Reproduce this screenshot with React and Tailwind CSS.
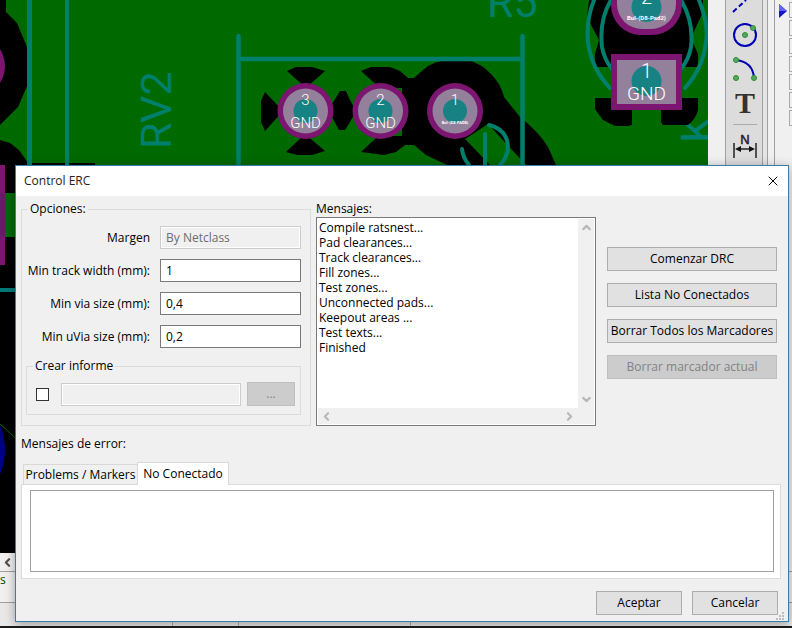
import React from 'react';
import { X, ChevronUp, ChevronDown, ChevronLeft, ChevronRight } from 'lucide-react';

const messages = [
  'Compile ratsnest...',
  'Pad clearances...',
  'Track clearances...',
  'Fill zones...',
  'Test zones...',
  'Unconnected pads...',
  'Keepout areas ...',
  'Test texts...',
  'Finished',
];

const fields = [
  { id: 'clearance', label: 'Margen', value: 'By Netclass', disabled: true },
  { id: 'track', label: 'Min track width (mm):', value: '1' },
  { id: 'via', label: 'Min via size (mm):', value: '0,4' },
  { id: 'uvia', label: 'Min uVia size (mm):', value: '0,2' },
];

const RoundPad = ({ x, number, net, small }) => (
  <g>
    <circle cx={x} cy="111" r="28" fill="#7d1670" />
    <circle cx={x} cy="111" r="22.5" fill="#93809b" />
    <circle cx={x} cy="111" r="12" fill="#178284" />
    <text x={x} y="105" fontSize="15" textAnchor="middle">{number}</text>
    <text x={x} y={small ? 124 : 128} fontSize={small ? 4 : 15} fontWeight={small ? 700 : 300} textAnchor="middle">{net}</text>
  </g>
);

const Board = () => (
  <svg
    className="absolute inset-0 h-full w-full"
    viewBox="0 0 708 553"
    preserveAspectRatio="xMinYMin slice"
    fontFamily="Roboto, sans-serif"
    fontWeight="300"
    fill="#fff"
  >
    <rect width="2000" height="553" fill="#006900" />

    {/* Left edge */}
    <path d="M0 0H6V12L17 23L27 47L28 75V84L18 107L0 125V140L10 143L19 150L28 163H95V180H0Z" fill="#000" />
    <circle cx="-26" cy="66" r="31" fill="#7d1670" />
    <rect y="165" width="200" height="388" fill="#000" />
    <rect y="193" width="80" height="44" fill="#006900" />
    <rect y="165" width="5" height="100" fill="#7d1670" />
    <rect y="193" width="5" height="44" fill="#6b1a69" />
    <rect y="288" width="80" height="4" fill="#007a78" />
    <circle cx="-58" cy="450" r="63" fill="#000087" />
    <path d="M0 424L60 478" stroke="#006900" />
    <g stroke="#00806c" strokeWidth="4" fill="none">
      <path d="M29.500 0V165" strokeWidth="5" />
      <path d="M67 0V165" />
    </g>

    {/* Thermal reliefs */}
    <g fill="#000">
      <path d="M287 71L296 67H312L325 71L306 88Z" />
      <path d="M286 152L305 134L325 151L312 155H297Z" />
      <path d="M265 92L283 111L265 131L261 122V101Z" />
      <path d="M340 91H346L350 100L356 111L350 122L345 130H339L332 117V104Z" />
      <path d="M361 71L371 67H390L400 71L408 78H414L423 70Q434 60 450 60H468Q482 64 491 74Q501 84 504 97L520 117Q538 131 548 147L556 165H526L488 124L465 139L490 165H447L426 155L414 145H405L396 152L384 155L361 152L378 136H402V88H380Z" />
    </g>
    <g stroke="#00806c" strokeWidth="4" fill="none" strokeLinecap="round">
      <path d="M238.500 36V165M522.500 36V165M240 59H521" strokeWidth="4.500" />
      <path d="M489 125Q508 130 508 148Q507 158 500 165M485 134V165M462 149Q463 158 469 165" />
    </g>
    <RoundPad x="305.500" number="3" net="GND" />
    <RoundPad x="380.500" number="2" net="GND" />
    <RoundPad x="455" number="1" net="Bul-(D8-PAD8)" small />

    <g fill="#00806c" fontWeight="400">
      <text transform="translate(171 149) rotate(-90)" fontSize="43">RV2</text>
      <text x="487" y="17" fontSize="43">R5</text>
      <text transform="translate(713 143) rotate(-90)" fontSize="44">K</text>
    </g>

    {/* Square pad */}
    <path d="M589 0H703V12L691 38L698 54V67H595V54L599 40L587 17Z" fill="#000" />
    <path d="M595 98H632V125L628 126H615L603 120L595 109ZM661 98H698V110Q696 119 688 125H663L661 122Z" fill="#000" />
    <g stroke="#00806c" strokeWidth="4" fill="none" strokeLinecap="round">
      <path d="M594 0Q586 20 588 42Q591 68 610 88M699 0Q709 25 706 42Q703 68 685 88" />
      <path d="M611 0Q599 20 602 47Q604 59 612 69M681 0Q694 22 691 47Q689 59 681 69" />
    </g>
    <rect x="611" y="-50" width="71" height="85" rx="30" fill="#7d1670" />
    <rect x="617" y="-50" width="59" height="79" rx="25" fill="#93809b" />
    <circle cx="646.500" cy="7" r="15" fill="#178284" />
    <text x="646.500" y="4" fontSize="20" textAnchor="middle">2</text>
    <text x="646.500" y="20" fontSize="6" fontWeight="700" textAnchor="middle">Bul-(D8-Pad2)</text>
    <rect x="611" y="54" width="71" height="56" fill="#7d1670" />
    <rect x="617" y="60" width="59" height="44" fill="#93809b" />
    <circle cx="646.500" cy="81" r="15" fill="#178284" />
    <text x="646.500" y="78" fontSize="20" textAnchor="middle">1</text>
    <text x="646.500" y="100" fontSize="19" textAnchor="middle">GND</text>
  </svg>
);

const Toolbar = () => (
  <svg className="block w-full" height="166" viewBox="0 0 36 166" fill="none">
    <g stroke="#0000b4" strokeWidth="2">
      <path d="M7 12L20 0" strokeDasharray="5 3" />
      <circle cx="19" cy="35" r="11" />
      <path d="M10 60Q27 62 28 78" />
    </g>
    <g fill="#4fae54" stroke="#35853b">
      <circle cx="19" cy="35" r="2.500" />
      <circle cx="27" cy="28" r="2.500" />
      <circle cx="10" cy="60" r="2.500" />
      <circle cx="10" cy="78" r="2.500" />
      <circle cx="28" cy="78" r="2.500" />
    </g>
    <text x="19" y="113" fontSize="30" fontWeight="700" fontFamily="Liberation Serif, serif" textAnchor="middle" fill="#333">T</text>
    <path d="M7 124.500H31" stroke="#aaa" />
    <text x="19" y="144" fontSize="13" fontFamily="Liberation Sans, sans-serif" textAnchor="middle" fill="#222" stroke="#222" strokeWidth="0.500">N</text>
    <path d="M8 143V158M30 143V158M11 149H27" stroke="#222" strokeWidth="1.500" />
    <path d="M9 149L15 146V152ZM29 149L23 146V152Z" fill="#111" />
  </svg>
);

const LayerList = () => (
  <div className="relative w-[18px] shrink-0 overflow-hidden border-l border-[#a0a0a0] bg-[#f0f0f0]">
    <svg className="absolute left-1 top-1" width="8" height="14" viewBox="0 0 8 14">
      <path d="M0 0L8 7L0 14Z" fill="#1414c8" />
      <path d="M0 0L8 7H0Z" fill="#6464f0" />
    </svg>
    <div className="ml-[14px] flex flex-col gap-[2px] pt-[2px]">
      {[0, 1, 2, 3, 4, 5, 6].map((row) => (
        <div key={row} className="h-4 border border-r-0 border-[#a8a8a8]" />
      ))}
    </div>
  </div>
);

const Button = ({ className = '', disabled, children }) => (
  <button
    type="button"
    disabled={disabled}
    className={`h-6 border border-[#adadad] bg-[#e1e1e1] text-center disabled:border-[#bfbfbf] disabled:bg-[#cccccc] disabled:text-[#838383] ${className}`}
  >
    {children}
  </button>
);

const Options = () => (
  <fieldset className="w-[290px] min-w-0 shrink-0 border border-[#dcdcdc] pb-[10px] pl-1 pr-[9px]">
    <legend className="ml-[2px] px-[2px]">Opciones:</legend>
    <div className="grid grid-cols-[1fr_141px] items-center gap-[10px] pt-[9px]">
      {fields.map((field) => (
        <React.Fragment key={field.id}>
          <label htmlFor={field.id} className="text-right">{field.label}</label>
          <input
            id={field.id}
            type="text"
            defaultValue={field.value}
            disabled={field.disabled}
            className="h-[23px] w-full border border-[#7a7a7a] bg-white px-[5px] disabled:border-[#cccccc] disabled:bg-[#f0f0f0] disabled:text-[#6d6d6d] disabled:shadow-[inset_0_0_0_1px_#fff]"
          />
        </React.Fragment>
      ))}
    </div>
    <fieldset className="mt-[10px] min-w-0 border border-[#dcdcdc] pb-2">
      <legend className="ml-[6px] px-[2px]">Crear informe</legend>
      <div className="flex items-center pl-[9px] pr-[5px] pt-2">
        <input type="checkbox" aria-label="Crear informe" className="size-[13px] appearance-none border border-[#333] bg-white" />
        <input type="text" aria-label="Archivo de informe" disabled className="ml-3 h-[23px] min-w-0 flex-1 border border-[#cccccc] bg-[#f0f0f0] shadow-[inset_0_0_0_1px_#fff]" />
        <Button disabled className="ml-[6px] w-12">...</Button>
      </div>
    </fieldset>
  </fieldset>
);

const Messages = () => (
  <div className="flex min-w-0 flex-1 flex-col">
    <label htmlFor="messages">Mensajes:</label>
    <div className="flex flex-1 flex-col border border-[#7a7a7a] bg-white p-px">
      <div className="flex flex-1">
        <textarea
          id="messages"
          readOnly
          wrap="off"
          defaultValue={messages.join('\n')}
          className="min-w-0 flex-1 resize-none overflow-hidden px-px pt-px leading-[15px] outline-none"
        />
        <div className="flex w-4 flex-col items-center justify-between bg-[#f0f0f0] py-[2px] text-[#b8b8b8]">
          <ChevronUp size={13} strokeWidth={4} />
          <ChevronDown size={13} strokeWidth={4} />
        </div>
      </div>
      <div className="flex h-4 items-center justify-between bg-[#f0f0f0] pl-[2px] pr-[18px] text-[#b8b8b8]">
        <ChevronLeft size={13} strokeWidth={4} />
        <ChevronRight size={13} strokeWidth={4} />
      </div>
    </div>
  </div>
);

const Dialog = () => (
  <div
    role="dialog"
    aria-labelledby="dialog-title"
    className="absolute left-[15px] right-[3px] top-[165px] border border-[#3a7cab] bg-[#f0f0f0] shadow-[0_2px_10px_rgba(0,0,0,0.35)]"
  >
    <div className="flex h-[30px] items-center justify-between bg-white pl-2 pr-[7px]">
      <h1 id="dialog-title" className="text-[#222]">Control ERC</h1>
      <button type="button" aria-label="Cerrar">
        <X size={16} strokeWidth={1.5} />
      </button>
    </div>

    <div className="flex gap-[5px] pl-[5px] pr-[11px] pt-[5px]">
      <Options />
      <Messages />
      <div className="ml-[6px] flex w-[170px] shrink-0 flex-col gap-3 pt-[46px]">
        <Button>Comenzar DRC</Button>
        <Button>Lista No Conectados</Button>
        <Button>Borrar Todos los Marcadores</Button>
        <Button disabled>Borrar marcador actual</Button>
      </div>
    </div>

    <div className="pl-[5px] pr-[7px] pt-[10px]">
      <h2>Mensajes de error:</h2>
      <div role="tablist" className="mt-[10px] flex items-end pl-[2px]">
        <button type="button" role="tab" aria-selected="false" className="h-[21px] w-[114px] whitespace-nowrap border border-r-0 border-[#d9d9d9] bg-[#f0f0f0]">
          Problems / Markers
        </button>
        <button type="button" role="tab" aria-selected="true" className="relative z-10 h-[23px] w-[92px] whitespace-nowrap border border-b-0 border-[#d9d9d9] bg-white">
          No Conectado
        </button>
      </div>
      <div role="tabpanel" className="-mt-px border border-[#dcdcdc] bg-white pb-[6px] pl-2 pr-[6px] pt-[5px]">
        <div role="listbox" aria-label="No Conectado" className="h-[82px] border border-[#a0a0a0] bg-white" />
      </div>
    </div>

    <div className="flex justify-end gap-[10px] pb-[6px] pr-[10px] pt-3">
      <Button className="w-[86px]">Aceptar</Button>
      <Button className="w-[86px]">Cancelar</Button>
    </div>

    {/* Resize grip */}
    <svg className="absolute bottom-px right-1" width="8" height="8" fill="#bdbdbd">
      <path d="M6 0h2v2h-2zM3 3h2v2h-2zM6 3h2v2h-2zM0 6h2v2h-2zM3 6h2v2h-2zM6 6h2v2h-2z" />
    </svg>
  </div>
);

const App = () => {
  return (
    <div className="relative flex h-screen flex-col overflow-hidden bg-[#f0f0f0] font-['Open_Sans','Noto_Sans',sans-serif] text-[12px] leading-4 text-black">
      {/* Editor window */}
      <div className="flex min-h-0 flex-1">
        <div className="flex min-w-0 flex-1 flex-col">
          <div className="relative flex-1 overflow-hidden">
            <Board />
          </div>
          <div className="flex h-[18px] items-center pl-px text-[#505050]">
            <ChevronLeft size={13} strokeWidth={4} />
          </div>
        </div>
        <div className="w-[17px] shrink-0 bg-[#f0f0f0]" />
        <div className="w-[38px] shrink-0 border-x border-[#a0a0a0] bg-[#dcdcdc]">
          <Toolbar />
        </div>
        <div className="w-[5px] shrink-0 border-r border-[#a0a0a0] bg-[#e4e4e4]" />
        <div className="w-[6px] shrink-0 bg-[#f0f0f0]" />
        <LayerList />
      </div>
      <div className="h-8 border-y border-[#a0a0a0] text-[#004800]">s</div>
      {/* Status bar */}
      <div className="flex h-[23px] bg-[#e8e8e8]">
        <div className="w-[173px] border-r border-[#b0b0b0]" />
        <div className="w-[66px] border-r border-[#b0b0b0]" />
        <div className="w-[172px] border-r border-[#b0b0b0]" />
      </div>
      <div className="h-[2px] bg-[#1c1c1c]" />

      <Dialog />
    </div>
  );
};

export default App;
